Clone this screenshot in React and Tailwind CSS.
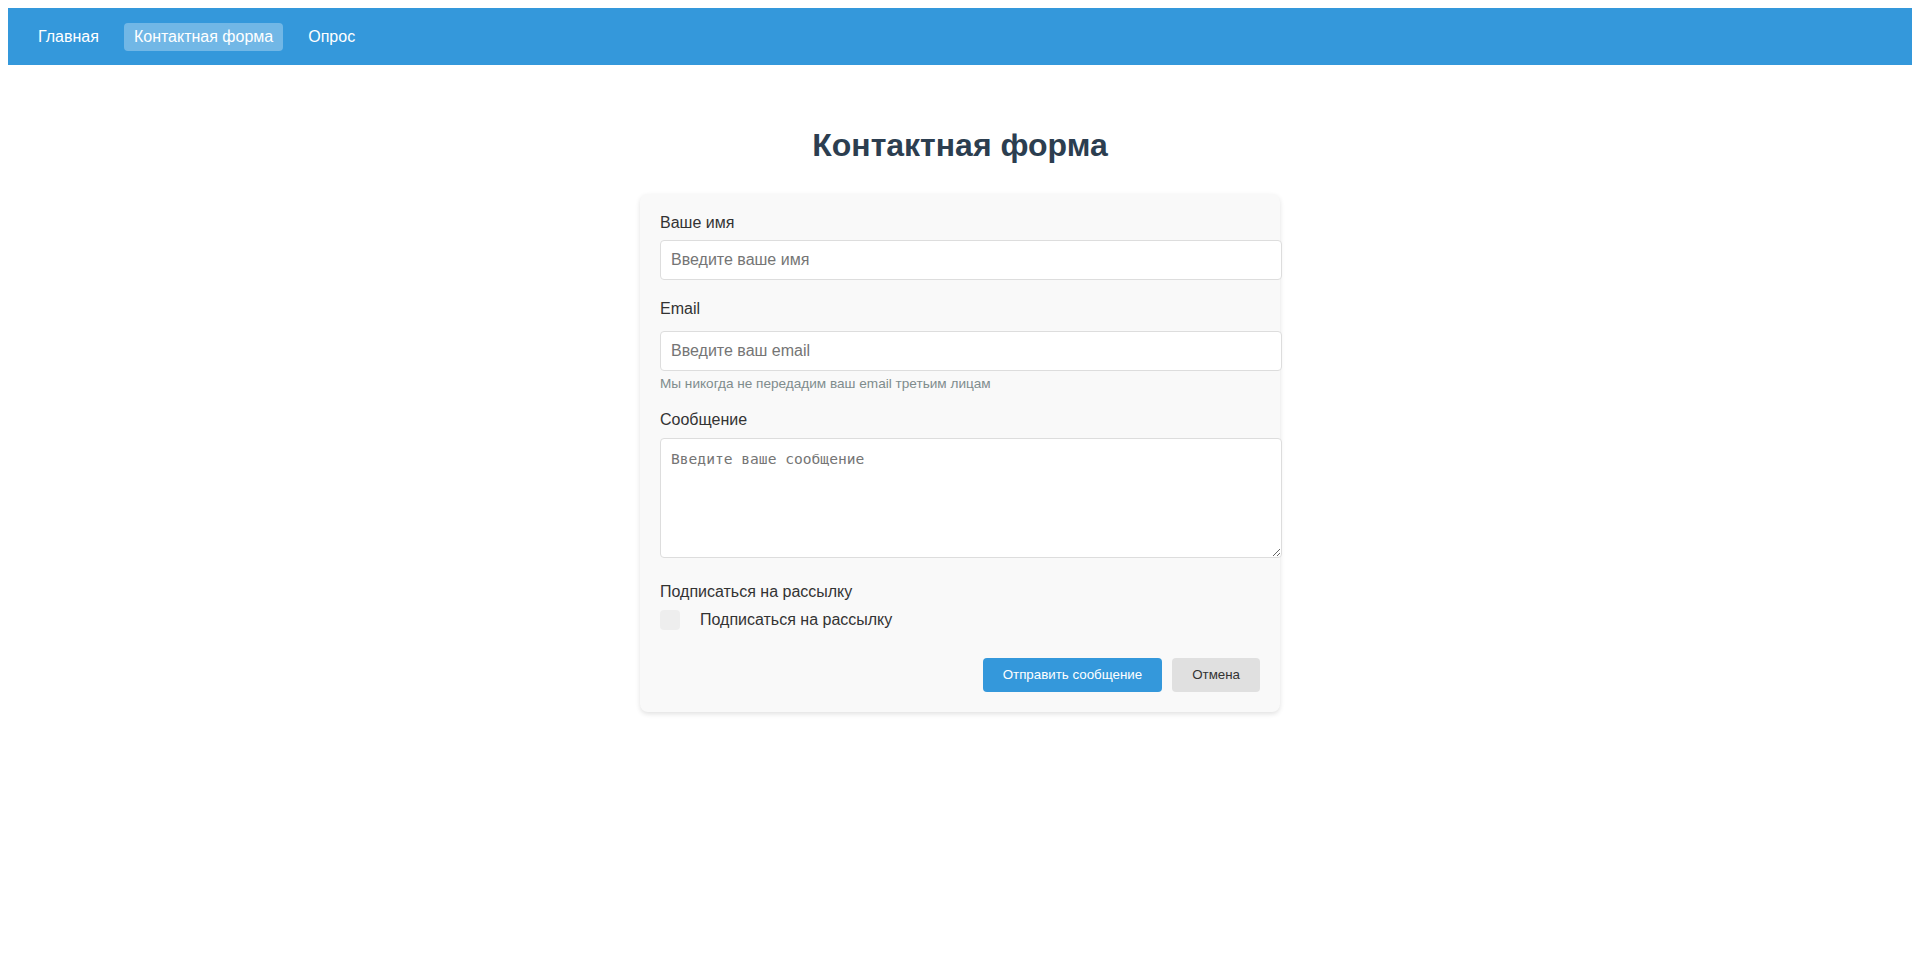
import React, { useState } from "react";

const navLinks = ["Главная", "Контактная форма", "Опрос"];

const Navbar = ({ active }) => (
  <nav className="bg-[#3498db] h-[57px] px-5 flex items-center gap-[15px]">
    {navLinks.map((link) => (
      <a
        key={link}
        href="#"
        className={
          link === active
            ? "px-[10px] py-[5px] leading-[18px] rounded-[4px] text-white text-[16px] bg-[rgba(255,255,255,0.3)]"
            : "px-[10px] py-[5px] leading-[18px] rounded-[4px] text-white text-[16px]"
        }
      >
        {link}
      </a>
    ))}
  </nav>
);

const App = () => {
  const [subscribe, setSubscribe] = useState(false);

  return (
    <div className="m-2 font-['Liberation_Sans',Arial,sans-serif] text-[#333]">
      <Navbar active="Контактная форма" />

      <main>
        <h1 className="mt-[62px] mb-[30px] text-center text-[32px] leading-[37px] font-bold text-[#2c3e50]">
          Контактная форма
        </h1>

        <form
          className="mx-auto w-[640px] bg-[#f9f9f9] rounded-[8px] px-5 pt-5 pb-5 shadow-[0_2px_5px_rgba(0,0,0,0.12)]"
          onSubmit={(e) => e.preventDefault()}
        >
          {/* Name */}
          <div className="mb-5">
            <label className="block text-[16px] leading-[18px] mb-[8px]">Ваше имя</label>
            <input
              type="text"
              placeholder="Введите ваше имя"
              className="block w-[622px] h-[40px] px-[10px] border border-[#ddd] rounded-[4px] bg-white text-[16px] placeholder:text-[#757575] outline-none"
            />
          </div>

          {/* Email */}
          <div className="mb-[19px]">
            <label className="block text-[16px] leading-[18px] mb-[13px]">Email</label>
            <input
              type="email"
              placeholder="Введите ваш email"
              className="block w-[622px] h-[40px] px-[10px] border border-[#ddd] rounded-[4px] bg-white text-[16px] placeholder:text-[#757575] outline-none"
            />
            <p className="mt-[5px] text-[13.6px] leading-[16px] text-[#7f8c8d]">
              Мы никогда не передадим ваш email третьим лицам
            </p>
          </div>

          {/* Message */}
          <div className="mb-[25px]">
            <label className="block text-[16px] leading-[18px] mb-[9px]">Сообщение</label>
            <textarea
              placeholder="Введите ваше сообщение"
              className="block w-[622px] h-[120px] px-[10px] py-[10px] border border-[#ddd] rounded-[4px] bg-white font-['DejaVu_Sans_Mono',monospace] text-[14.6px] leading-[20px] placeholder:text-[#757575] outline-none"
            />
          </div>

          {/* Subscribe */}
          <div>
            <label className="block text-[16px] leading-[18px] mb-[9px]">Подписаться на рассылку</label>
            <label className="flex items-center gap-5 h-[20px] text-[16px] leading-[18px] cursor-pointer">
              <input
                type="checkbox"
                checked={subscribe}
                onChange={() => setSubscribe(!subscribe)}
                className="appearance-none w-[20px] h-[20px] rounded-[4px] bg-[#eee] checked:bg-[#3498db] shrink-0"
              />
              <span>Подписаться на рассылку</span>
            </label>
          </div>

          {/* Actions */}
          <div className="mt-[28px] flex justify-end gap-[10px]">
            <button
              type="submit"
              className="h-[34px] px-5 rounded-[4px] bg-[#3498db] text-white text-[13.33px]"
            >
              Отправить сообщение
            </button>
            <button
              type="button"
              className="h-[34px] px-5 rounded-[4px] bg-[#e0e0e0] text-[#333] text-[13.33px]"
            >
              Отмена
            </button>
          </div>
        </form>
      </main>
    </div>
  );
};

export default App;
